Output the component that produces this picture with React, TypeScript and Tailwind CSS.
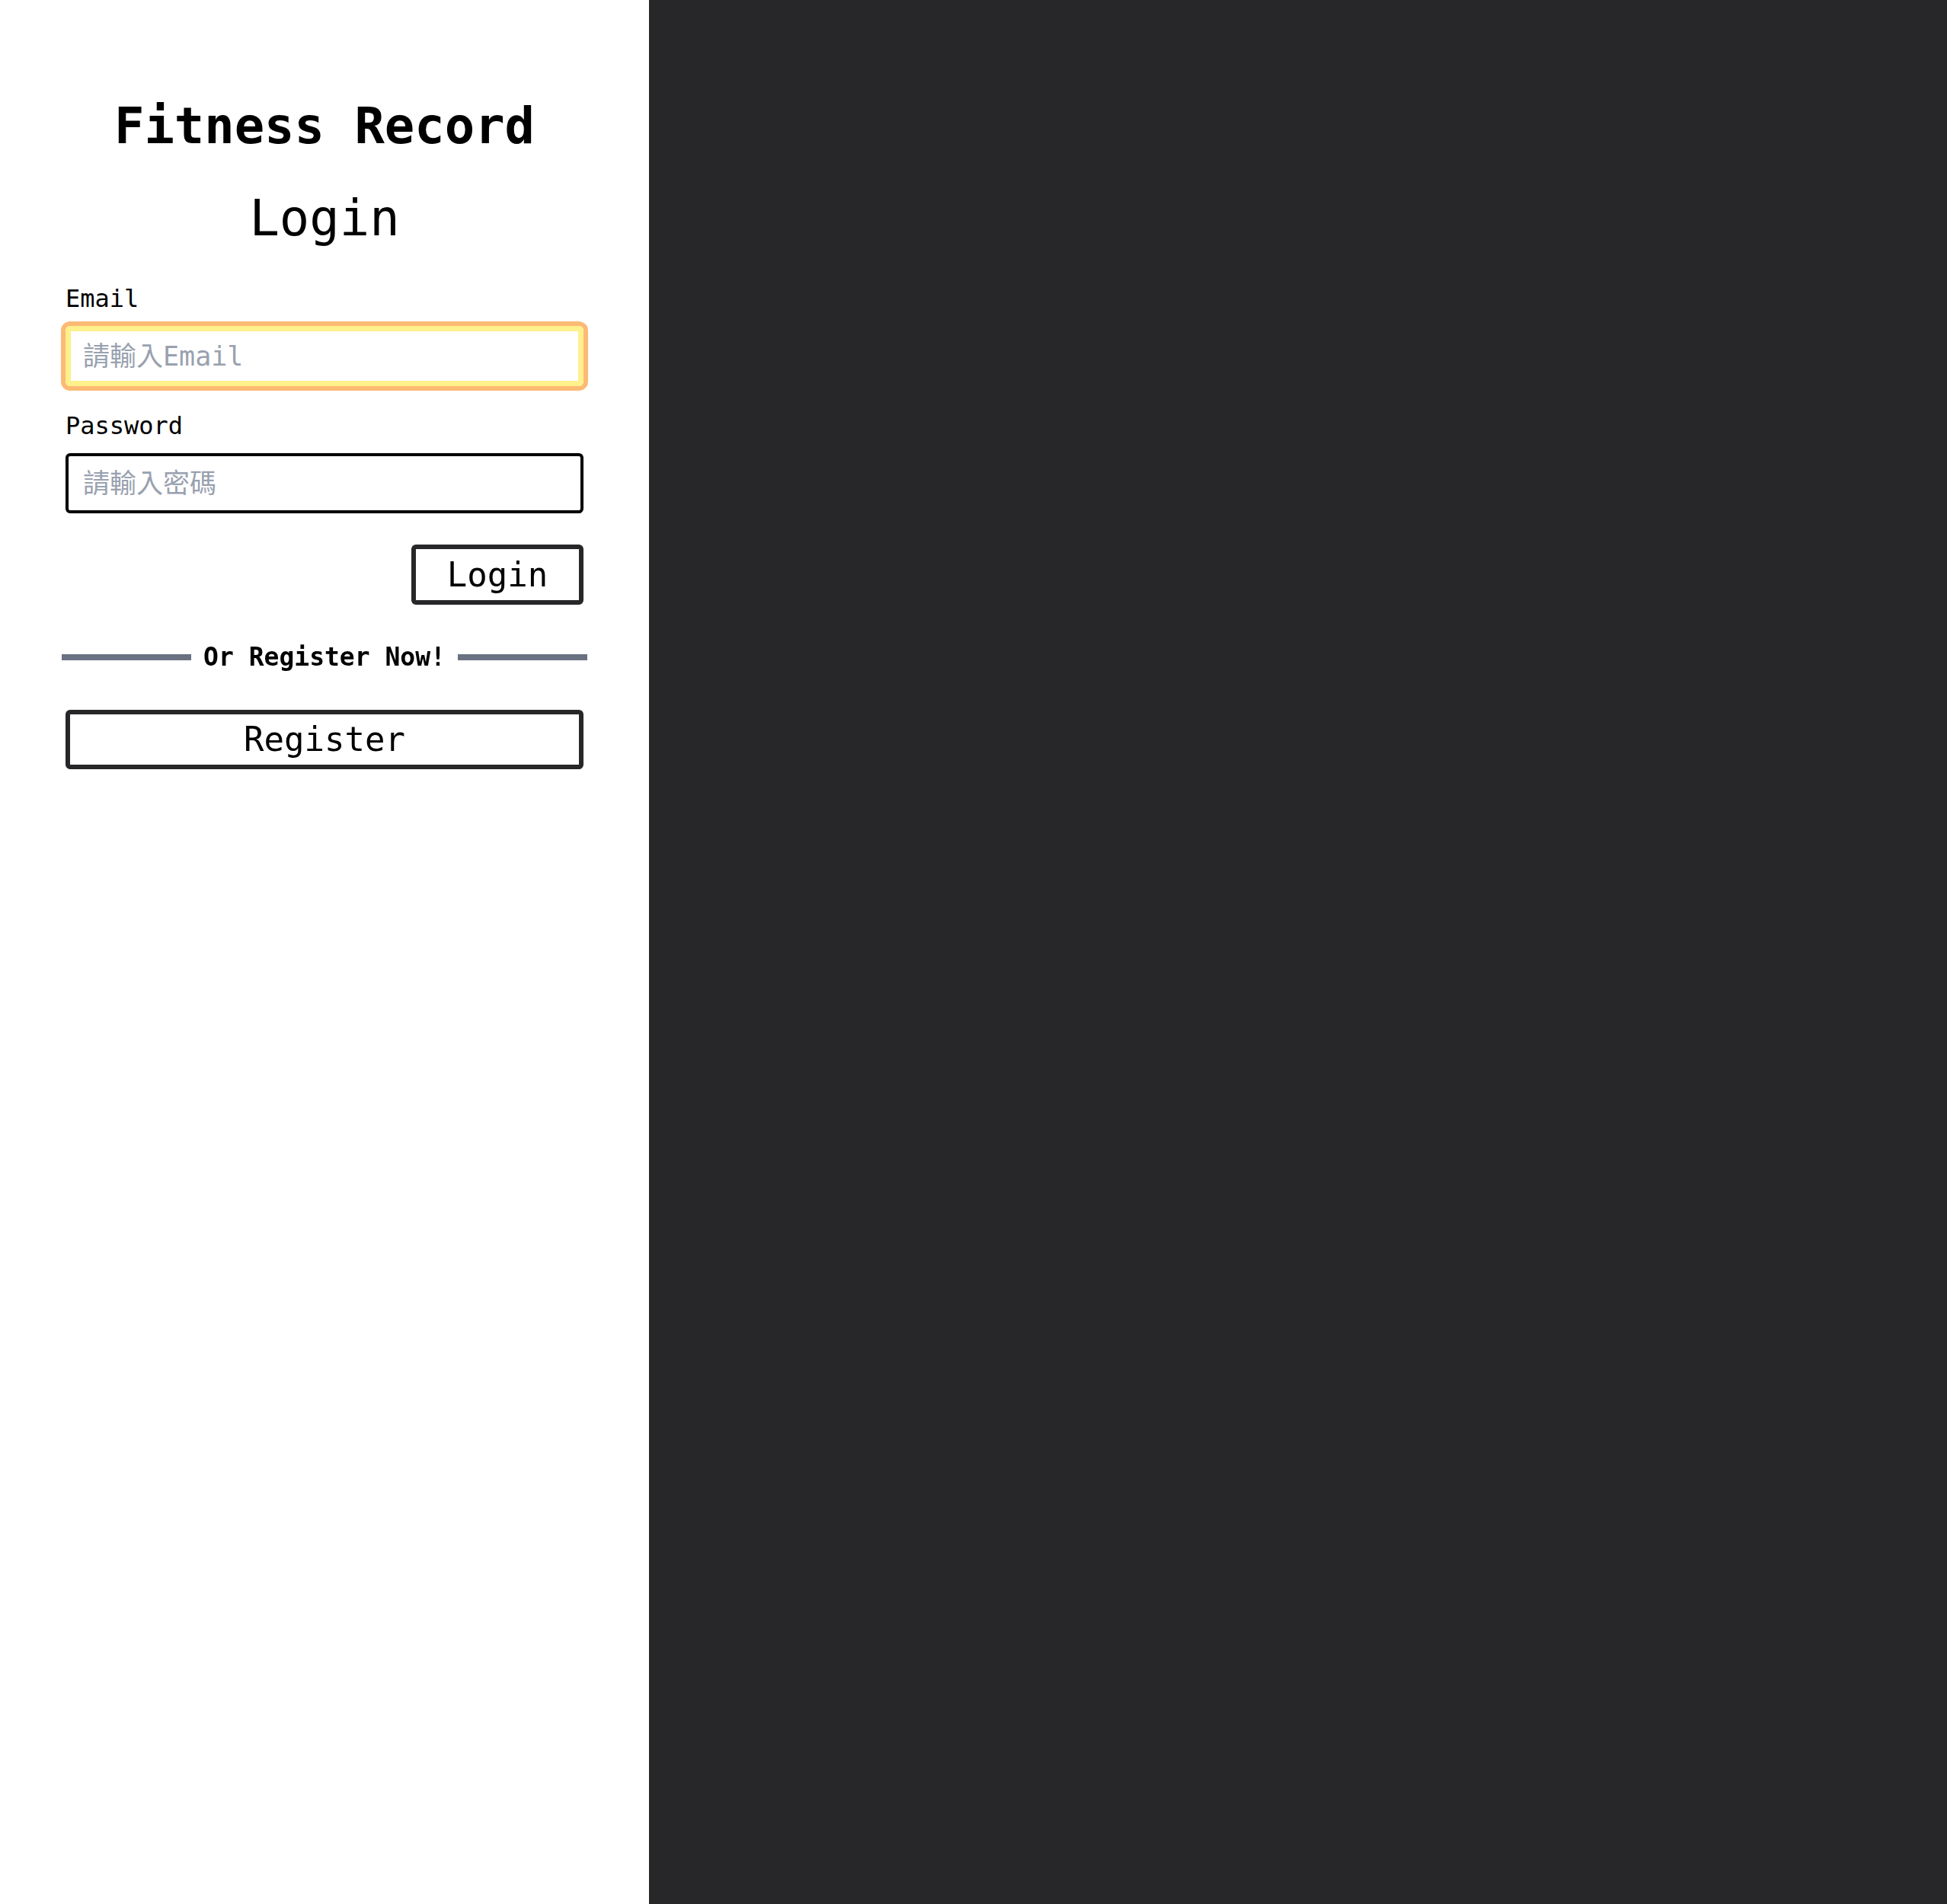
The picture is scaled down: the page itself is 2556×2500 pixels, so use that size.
import { useState } from "react";

const mono = "font-['DejaVu_Sans_Mono','Noto_Sans_CJK_TC',monospace]";

export default function App() {
  const [email, setEmail] = useState("");
  const [password, setPassword] = useState("");

  return (
    <div className={`flex h-[2500px] w-full ${mono}`}>
      {/* Login panel */}
      <div className="w-[852px] bg-white px-[86px] pt-[133px] text-black">
        <h1 className="text-center text-[65.5px] leading-[64px] font-bold">Fitness Record</h1>
        <h2 className="mt-[57px] text-center text-[65.5px] leading-[64px]">Login</h2>

        <form className="mt-[58px] flex flex-col" onSubmit={(e) => e.preventDefault()}>
          <label htmlFor="email" className="text-[32px] leading-[32px]">
            Email
          </label>
          <input
            id="email"
            type="email"
            autoFocus
            value={email}
            onChange={(e) => setEmail(e.target.value)}
            placeholder="請輸入Email"
            className="mt-[20px] h-[79px] w-full rounded-[6px] border-4 border-[#fef08a] px-[19px] text-[35px] shadow-[0_0_0_6px_#fdba74,inset_0_0_0_3px_#fef08a] outline-none placeholder:text-gray-400"
          />

          <label htmlFor="password" className="mt-[36px] text-[32px] leading-[32px]">
            Password
          </label>
          <input
            id="password"
            type="password"
            value={password}
            onChange={(e) => setPassword(e.target.value)}
            placeholder="請輸入密碼"
            className="mt-[20px] h-[79px] w-full rounded-[6px] border-4 border-black px-[19px] text-[35px] outline-none placeholder:text-gray-400"
          />

          <div className="mt-[41px] flex justify-end">
            <button
              type="submit"
              className="flex h-[79px] w-[226px] items-center justify-center rounded-[6px] border-[6px] border-zinc-800 text-[44px] leading-none"
            >
              Login
            </button>
          </div>
        </form>

        <div className="-mx-[5px] mt-[53px] flex items-center gap-[16px]">
          <div className="h-[8px] flex-1 bg-gray-500" />
          <span className="text-[33px] leading-[32px] font-bold">Or Register Now!</span>
          <div className="h-[8px] flex-1 bg-gray-500" />
        </div>

        <button
          type="button"
          className="mt-[53px] flex h-[78px] w-full items-center justify-center rounded-[6px] border-[6px] border-zinc-800 text-[44px] leading-none"
        >
          Register
        </button>
      </div>

      {/* Dark side */}
      <div className="flex-1 bg-zinc-800" />
    </div>
  );
}
